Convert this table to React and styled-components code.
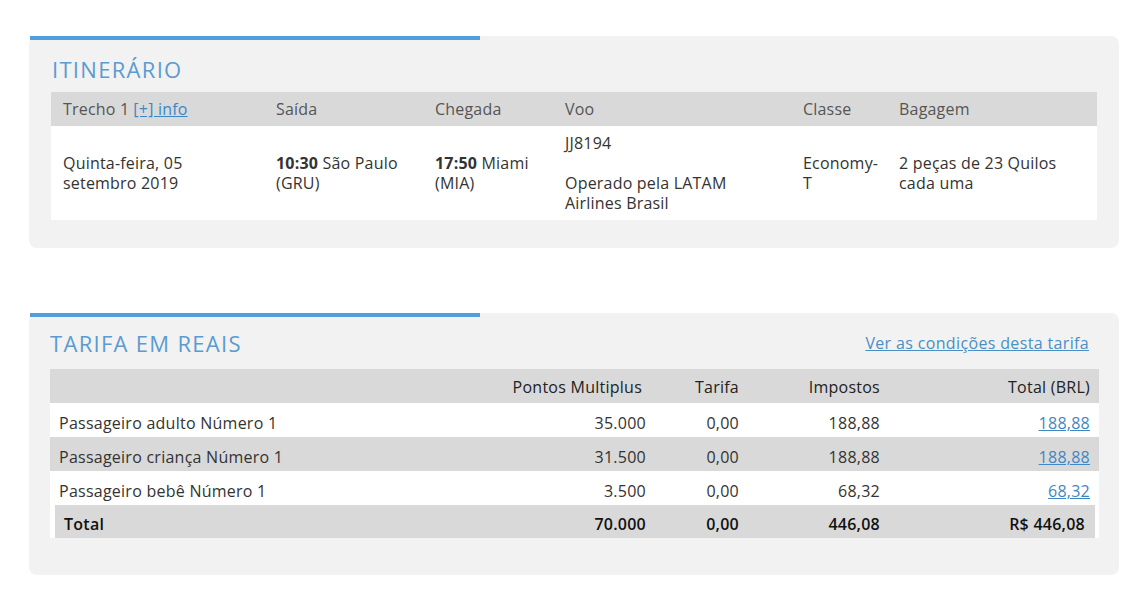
import React from "react";
import styled, { createGlobalStyle } from "styled-components";

const Global = createGlobalStyle`
  html, body { margin: 0; padding: 0; background: #ffffff; }
  body { font-family: "Open Sans", "Liberation Sans", sans-serif; color: #333; }
  * { box-sizing: border-box; }
`;

const Page = styled.div`
  padding: 36px 27px 0 29px;
  display: flex;
  flex-direction: column;
  gap: 65px;
`;

const Card = styled.section`
  position: relative;
  background: #f2f2f2;
  border-radius: 8px;
  padding: 4px ${(p) => p.$pr}px ${(p) => p.$pb}px ${(p) => p.$pl}px;
  &::before {
    content: "";
    position: absolute;
    left: 1px;
    top: 0;
    width: 450px;
    height: 4px;
    background: #4f9fdc;
  }
`;

const CardHead = styled.div`
  display: flex;
  align-items: center;
  justify-content: space-between;
  padding: ${(p) => p.$pt}px 0 ${(p) => p.$pb}px ${(p) => p.$pl}px;
`;

const Title = styled.h2`
  margin: 0;
  font-size: 22px;
  line-height: 26px;
  font-weight: 400;
  color: #5a9bd1;
  letter-spacing: 1.3px;
`;

const HeadLink = styled.a`
  font-size: 16px;
  letter-spacing: 0.35px;
  color: #4a8fc4;
  text-decoration: underline;
  margin-right: 10px;
  cursor: pointer;
`;

/* Itinerary table */
const ItinGrid = styled.div`
  display: grid;
  grid-template-columns: 213px 159px 130px 238px 96px 210px;
  font-size: 16px;
  letter-spacing: 0.2px;
`;

const ItinHeadCell = styled.div`
  background: #d9d9d9;
  height: 34px;
  display: flex;
  align-items: center;
  padding: 0 12px;
  color: #555;
  white-space: nowrap;
`;

const ItinCell = styled.div`
  background: #fff;
  padding: 7px 12px;
  line-height: 20px;
  color: #333;
  display: flex;
  flex-direction: column;
  justify-content: center;
  white-space: nowrap;
`;

const InfoLink = styled.a`
  color: #3d87c6;
  text-decoration: underline;
  margin-left: 4px;
  cursor: pointer;
`;

/* Fare table */
const FareTable = styled.div`
  background: #fff;
  font-size: 16px;
  letter-spacing: 0.25px;
`;

const FareRow = styled.div`
  display: grid;
  grid-template-columns: ${(p) => (p.$inset ? "435px" : "440px")} 164px 93px 141px 1fr;
  height: ${(p) => p.$h || 34}px;
  align-items: center;
  background: ${(p) => p.$bg};
  color: ${(p) => p.$color || "#333"};
  font-weight: ${(p) => p.$weight || 400};
  padding-top: ${(p) => p.$shift ?? 5}px;
  margin: ${(p) => (p.$inset ? "0 4px 4px 5px" : "0")};
`;

const FareCell = styled.div`
  text-align: ${(p) => (p.$left ? "left" : "right")};
  padding: 0 ${(p) => p.$pr ?? 8}px 0 ${(p) => p.$pl ?? 9}px;
  white-space: nowrap;
`;

const AmountLink = styled.a`
  color: #3d87c6;
  text-decoration: underline;
  cursor: pointer;
`;

const fares = [
  { label: "Passageiro adulto Número 1", pts: "35.000", tar: "0,00", imp: "188,88", tot: "188,88", bg: "#fff" },
  { label: "Passageiro criança Número 1", pts: "31.500", tar: "0,00", imp: "188,88", tot: "188,88", bg: "#d9d9d9" },
  { label: "Passageiro bebê Número 1", pts: "3.500", tar: "0,00", imp: "68,32", tot: "68,32", bg: "#fff" },
];

export default function App() {
  return (
    <>
      <Global />
      <Page>
        <Card $pl={22} $pr={22} $pb={28}>
          <CardHead $pt={16} $pb={10} $pl={1}>
            <Title>ITINERÁRIO</Title>
          </CardHead>
          <ItinGrid>
            <ItinHeadCell>
              <span>
                Trecho 1<InfoLink>[+] info</InfoLink>
              </span>
            </ItinHeadCell>
            <ItinHeadCell>Saída</ItinHeadCell>
            <ItinHeadCell>Chegada</ItinHeadCell>
            <ItinHeadCell>Voo</ItinHeadCell>
            <ItinHeadCell>Classe</ItinHeadCell>
            <ItinHeadCell>Bagagem</ItinHeadCell>

            <ItinCell>
              <span>
                Quinta-feira, 05
                <br />
                setembro 2019
              </span>
            </ItinCell>
            <ItinCell>
              <span>
                <b>10:30</b> São Paulo
                <br />
                (GRU)
              </span>
            </ItinCell>
            <ItinCell>
              <span>
                <b>17:50</b> Miami
                <br />
                (MIA)
              </span>
            </ItinCell>
            <ItinCell>
              <span>
                JJ8194
                <br />
                <br />
                Operado pela LATAM
                <br />
                Airlines Brasil
              </span>
            </ItinCell>
            <ItinCell>
              <span>
                Economy-
                <br />T
              </span>
            </ItinCell>
            <ItinCell>
              <span>
                2 peças de 23 Quilos
                <br />
                cada uma
              </span>
            </ItinCell>
          </ItinGrid>
        </Card>

        <Card $pl={21} $pr={20} $pb={33}>
          <CardHead $pt={13} $pb={13} $pl={0}>
            <Title>TARIFA EM REAIS</Title>
            <HeadLink>Ver as condições desta tarifa</HeadLink>
          </CardHead>
          <FareTable>
            <FareRow $bg="#d9d9d9" $color="#222" $weight={500} $shift={2}>
              <FareCell $left />
              <FareCell $pr={12}>Pontos Multiplus</FareCell>
              <FareCell>Tarifa</FareCell>
              <FareCell>Impostos</FareCell>
              <FareCell $pr={9}>Total (BRL)</FareCell>
            </FareRow>
            {fares.map((f) => (
              <FareRow key={f.label} $bg={f.bg}>
                <FareCell $left>{f.label}</FareCell>
                <FareCell>{f.pts}</FareCell>
                <FareCell>{f.tar}</FareCell>
                <FareCell>{f.imp}</FareCell>
                <FareCell $pr={9}>
                  <AmountLink>{f.tot}</AmountLink>
                </FareCell>
              </FareRow>
            ))}
            <FareRow $inset $h={33} $bg="#d9d9d9" $color="#111" $weight={600}>
              <FareCell $left>Total</FareCell>
              <FareCell>70.000</FareCell>
              <FareCell>0,00</FareCell>
              <FareCell>446,08</FareCell>
              <FareCell $pr={10}>R$ 446,08</FareCell>
            </FareRow>
          </FareTable>
        </Card>
      </Page>
    </>
  );
}
